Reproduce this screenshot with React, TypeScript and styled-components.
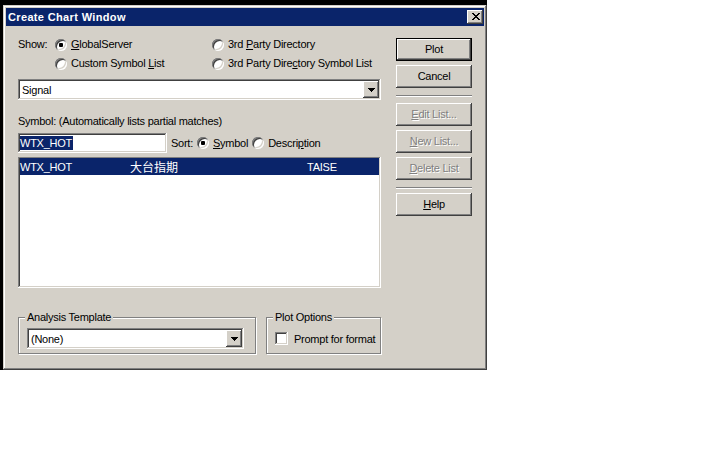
import React from 'react';
import styled, { createGlobalStyle, css } from 'styled-components';

const GlobalStyle = createGlobalStyle`
  html, body {
    margin: 0;
    padding: 0;
    background: #fff;
  }
  body {
    font-family: "Liberation Sans", Arial, "Noto Sans CJK TC", sans-serif;
    font-size: 11px;
    letter-spacing: -0.25px;
    color: #000;
  }
`;

const raised = css`
  box-shadow: inset -1px -1px #404040, inset 1px 1px #fff, inset -2px -2px #808080,
    inset 2px 2px #d4d0c8;
`;

const sunken = css`
  box-shadow: inset -1px -1px #fff, inset 1px 1px #808080, inset -2px -2px #d4d0c8,
    inset 2px 2px #404040;
`;

const Screen = styled.div`
  display: inline-block;
  background: #000;
  padding: 5px 0 0 3px;
`;

const Dialog = styled.div`
  width: 484px;
  height: 365px;
  box-sizing: border-box;
  padding: 3px;
  background: #d4d0c8;
  box-shadow: inset -1px -1px #404040, inset 1px 1px #d4d0c8, inset -2px -2px #808080,
    inset 2px 2px #fff;
  display: flex;
  flex-direction: column;
`;

const TitleBar = styled.div`
  height: 18px;
  background: #0a246a;
  color: #fff;
  display: flex;
  align-items: center;
  justify-content: space-between;
  padding: 0 1px 0 2px;
`;

const Title = styled.span`
  font-weight: bold;
  letter-spacing: 0.35px;
`;

const CloseButton = styled.div`
  width: 16px;
  height: 14px;
  background: #d4d0c8;
  ${raised};
  display: flex;
  align-items: center;
  justify-content: center;
  padding: 0 0 1px 1px;
  box-sizing: border-box;
`;

const Body = styled.div`
  display: flex;
  padding: 9px 0 0 12px;
`;

const LeftColumn = styled.div`
  width: 363px;
  margin-right: 15px;
  display: flex;
  flex-direction: column;
`;

const RightColumn = styled.div`
  width: 76px;
  padding-top: 3px;
  display: flex;
  flex-direction: column;
`;

const ShowGrid = styled.div`
  display: grid;
  grid-template-columns: 37px 157px auto;
  grid-auto-rows: 19px;
  align-items: center;
`;

const Label = styled.span`
  line-height: 13px;
  white-space: nowrap;
`;

const RadioItem = styled.label`
  display: flex;
  align-items: center;
  gap: 4px;
  white-space: nowrap;
  line-height: 13px;
`;

const RadioDot = styled.span<{ $checked?: boolean }>`
  width: 12px;
  height: 12px;
  flex: none;
  border-radius: 50%;
  background: #fff;
  box-shadow: inset 1px 1px #808080, inset -1px -1px #fff, inset 2px 2px #404040,
    inset -2px -2px #d4d0c8;
  display: flex;
  align-items: center;
  justify-content: center;

  &::after {
    content: '';
    width: 4px;
    height: 4px;
    border-radius: 1px;
    background: ${(p) => (p.$checked ? '#000' : 'transparent')};
  }
`;

const CheckBox = styled.span`
  width: 13px;
  height: 13px;
  flex: none;
  background: #fff;
  ${sunken};
`;

const Combo = styled.div<{ $width: number }>`
  width: ${(p) => p.$width}px;
  height: 21px;
  box-sizing: border-box;
  background: #fff;
  ${sunken};
  display: flex;
  align-items: center;
  padding: 0 2px 0 4px;
`;

const ComboText = styled.span`
  flex: 1;
`;

const DropButton = styled.div`
  width: 16px;
  height: 17px;
  background: #d4d0c8;
  ${raised};
  display: flex;
  align-items: center;
  justify-content: center;
`;

const ComboWrap = styled.div`
  margin-top: 6px;
`;

const SymbolLabel = styled(Label)`
  margin-top: 15px;
`;

const EditRow = styled.div`
  margin-top: 5px;
  height: 20px;
  display: flex;
  align-items: center;
  gap: 4px;
`;

const EditBox = styled.div`
  width: 149px;
  height: 20px;
  box-sizing: border-box;
  background: #fff;
  ${sunken};
  display: flex;
  align-items: center;
  padding: 0 2px;
`;

const Selected = styled.span`
  background: #0a246a;
  color: #fff;
  line-height: 14px;
  padding-right: 1px;
`;

const ListBox = styled.div`
  margin-top: 4px;
  height: 131px;
  box-sizing: border-box;
  background: #fff;
  ${sunken};
  padding: 1px 2px 2px;
`;

const ListRow = styled.div<{ $selected?: boolean }>`
  height: 17px;
  display: grid;
  grid-template-columns: 110px 177px auto;
  align-items: center;
  background: ${(p) => (p.$selected ? '#0a246a' : 'transparent')};
  color: ${(p) => (p.$selected ? '#fff' : '#000')};
`;

const CjkCell = styled.span`
  font-size: 12px;
  letter-spacing: 0;
`;

const GroupRow = styled.div`
  margin-top: 29px;
  display: flex;
  gap: 10px;
`;

const Group = styled.div<{ $width: number }>`
  position: relative;
  width: ${(p) => p.$width}px;
  height: 37px;
  box-sizing: border-box;
  border: 1px solid #808080;
  box-shadow: inset 1px 1px #fff, 1px 1px #fff;
  padding: 10px 8px 0;
  display: flex;
  align-items: flex-start;
`;

const GroupTitle = styled.span`
  position: absolute;
  top: -7px;
  left: 6px;
  padding: 0 2px;
  line-height: 13px;
  background: #d4d0c8;
  white-space: nowrap;
`;

const CheckItem = styled.label`
  height: 21px;
  display: flex;
  align-items: center;
  gap: 6px;
  white-space: nowrap;
`;

const Button = styled.div<{ $default?: boolean; $disabled?: boolean }>`
  height: 23px;
  box-sizing: border-box;
  background: #d4d0c8;
  display: flex;
  align-items: center;
  justify-content: center;
  line-height: 13px;
  color: ${(p) => (p.$disabled ? '#808080' : '#000')};
  text-shadow: ${(p) => (p.$disabled ? '1px 1px 0 #fff' : 'none')};
  ${(p) =>
    p.$default
      ? css`
          border: 1px solid #000;
          box-shadow: inset -1px -1px #404040, inset 1px 1px #fff, inset -2px -2px #808080,
            inset 2px 2px #d4d0c8;
        `
      : raised};
  & + & {
    margin-top: 4px;
  }
`;

const Separator = styled.div<{ $after: number }>`
  height: 0;
  border-top: 1px solid #808080;
  border-bottom: 1px solid #fff;
  margin: 7px 0 ${(p) => p.$after}px;
`;

const CloseGlyph = () => (
  <svg width="8" height="7" viewBox="0 0 8 7" shapeRendering="crispEdges">
    <path
      d="M0 0h2v1H0zM6 0h2v1H6zM1 1h2v1H1zM5 1h2v1H5zM2 2h4v1H2zM3 3h2v1H3zM2 4h4v1H2zM1 5h2v1H1zM5 5h2v1H5zM0 6h2v1H0zM6 6h2v1H6z"
      fill="#000"
    />
  </svg>
);

const ArrowGlyph = () => (
  <svg width="7" height="4" viewBox="0 0 7 4" shapeRendering="crispEdges">
    <path d="M0 0h7v1H0zM1 1h5v1H1zM2 2h3v1H2zM3 3h1v1H3z" fill="#000" />
  </svg>
);

const Radio: React.FC<{ checked?: boolean; children: React.ReactNode }> = ({
  checked,
  children,
}) => (
  <RadioItem>
    <RadioDot $checked={checked} />
    <span>{children}</span>
  </RadioItem>
);

const ComboBox: React.FC<{ width: number; value: string }> = ({ width, value }) => (
  <Combo $width={width}>
    <ComboText>{value}</ComboText>
    <DropButton>
      <ArrowGlyph />
    </DropButton>
  </Combo>
);

const App: React.FC = () => {
  return (
    <>
      <GlobalStyle />
      <Screen>
        <Dialog>
          <TitleBar>
            <Title>Create Chart Window</Title>
            <CloseButton>
              <CloseGlyph />
            </CloseButton>
          </TitleBar>
          <Body>
            <LeftColumn>
              <ShowGrid>
                <Label>Show:</Label>
                <Radio checked>
                  <u>G</u>lobalServer
                </Radio>
                <Radio>
                  3rd <u>P</u>arty Directory
                </Radio>
                <span />
                <Radio>
                  Custom Symbol <u>L</u>ist
                </Radio>
                <Radio>
                  3rd Party Dire<u>c</u>tory Symbol List
                </Radio>
              </ShowGrid>
              <ComboWrap>
                <ComboBox width={363} value="Signal" />
              </ComboWrap>
              <SymbolLabel>Symbol: (Automatically lists partial matches)</SymbolLabel>
              <EditRow>
                <EditBox>
                  <Selected>WTX_HOT</Selected>
                </EditBox>
                <Label>Sort:</Label>
                <Radio checked>
                  <u>S</u>ymbol
                </Radio>
                <Radio>
                  Descri<u>p</u>tion
                </Radio>
              </EditRow>
              <ListBox>
                <ListRow $selected>
                  <span>WTX_HOT</span>
                  <CjkCell>大台指期</CjkCell>
                  <span>TAISE</span>
                </ListRow>
              </ListBox>
              <GroupRow>
                <Group $width={239}>
                  <GroupTitle>Analysis Template</GroupTitle>
                  <ComboBox width={217} value="(None)" />
                </Group>
                <Group $width={115}>
                  <GroupTitle>Plot Options</GroupTitle>
                  <CheckItem>
                    <CheckBox />
                    <span>Prompt for format</span>
                  </CheckItem>
                </Group>
              </GroupRow>
            </LeftColumn>
            <RightColumn>
              <Button $default>Plot</Button>
              <Button>Cancel</Button>
              <Separator $after={6} />
              <Button $disabled>
                <u>E</u>dit List...
              </Button>
              <Button $disabled>
                <u>N</u>ew List...
              </Button>
              <Button $disabled>
                <u>D</u>elete List
              </Button>
              <Separator $after={4} />
              <Button>
                <u>H</u>elp
              </Button>
            </RightColumn>
          </Body>
        </Dialog>
      </Screen>
    </>
  );
};

export default App;
